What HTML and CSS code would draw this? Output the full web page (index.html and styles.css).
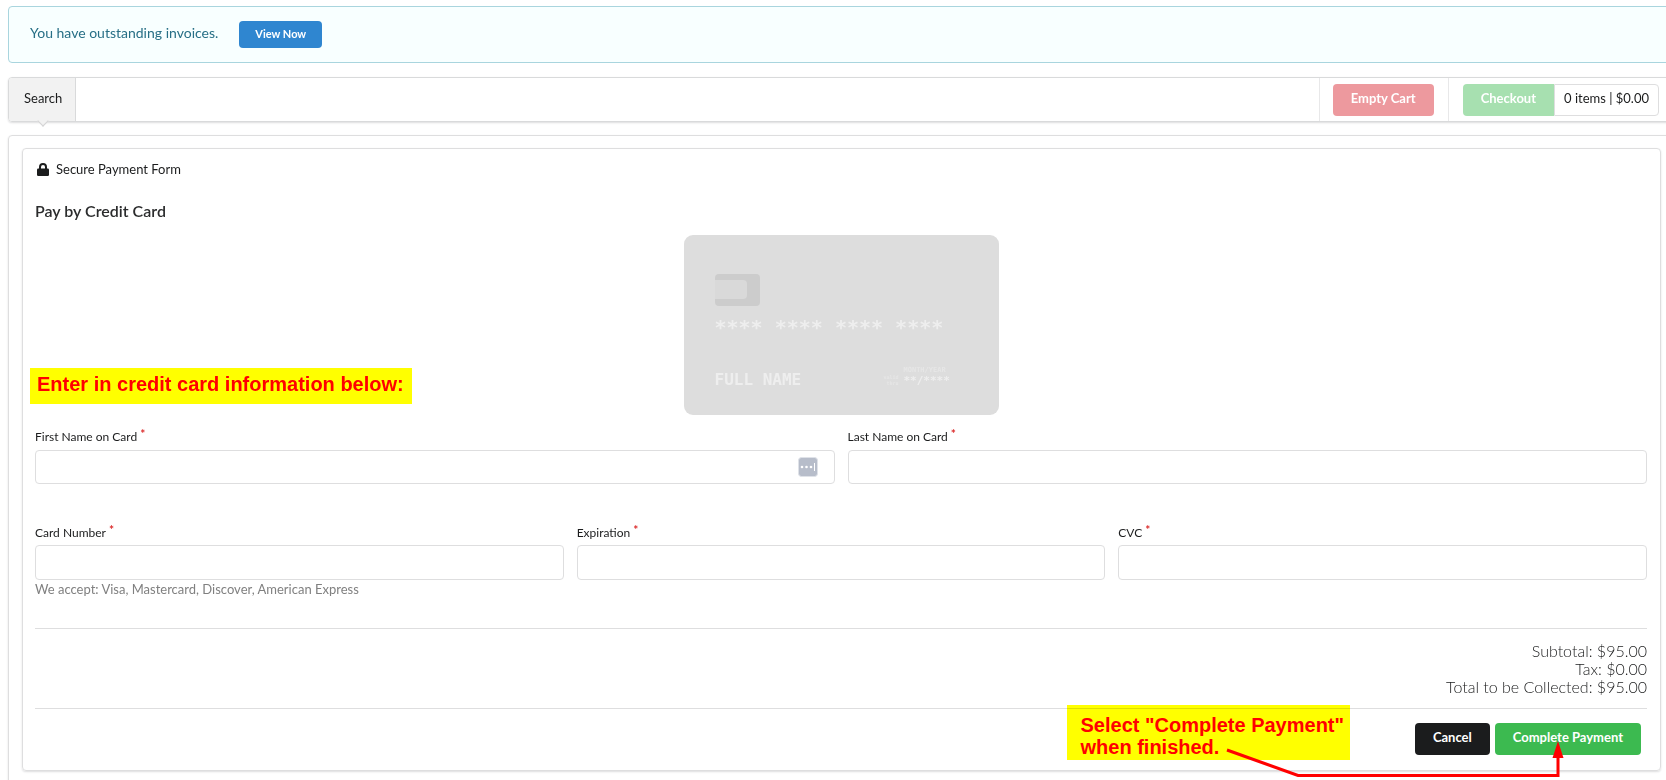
FILE: index.html
```html
<!DOCTYPE html>
<html lang="en">
<head>
<meta charset="utf-8">
<title>Secure Payment Form</title>
<link rel="stylesheet" href="styles.css">
</head>
<body>
<div class="page">
  <section class="message">
    <p class="message-text">You have outstanding invoices.</p>
    <button type="button" class="button small blue">View Now</button>
  </section>

  <nav class="menu">
    <a href="#" class="menu-item active">Search</a>
    <div class="menu-right">
      <div class="menu-cell"><button type="button" class="button red">Empty Cart</button></div>
      <div class="menu-cell last">
        <button type="button" class="button mint">Checkout</button>
        <a href="#" class="cart-label">0 items | $0.00</a>
      </div>
    </div>
  </nav>

  <main class="segment outer">
    <form class="segment inner">
      <header class="form-header">
        <svg class="lock" viewBox="0 0 12 13" aria-hidden="true">
          <path d="M3 6V4a3 3 0 0 1 6 0v2" fill="none" stroke="#1b1c1d" stroke-width="2"/>
          <rect x="0" y="5.500" width="12" height="7.500" rx="1.200" fill="#1b1c1d"/>
        </svg>
        <span>Secure Payment Form</span>
      </header>
      <h1 class="title">Pay by Credit Card</h1>

      <div class="card-stage">
        <div class="card">
          <div class="chip"><div class="chip-inner"></div></div>
          <div class="card-number">**** **** **** ****</div>
          <div class="card-foot">
            <div class="card-name">FULL NAME</div>
            <div class="card-valid">valid<br>thru</div>
            <div class="card-date"><div class="card-caption">MONTH/YEAR</div>**/****</div>
          </div>
        </div>
        <p class="note note-enter">Enter in credit card information below:</p>
      </div>

      <div class="row two">
        <div class="field">
          <label for="first">First Name on Card<span class="req">*</span></label>
          <div class="input-wrap">
            <input id="first" type="text">
            <svg class="fill-icon" viewBox="0 0 20 20" aria-hidden="true">
              <rect x="0.500" y="0.500" width="19" height="19" rx="3" fill="#b7bdca" stroke="#dfe2e8"/>
              <circle cx="4" cy="10" r="1.300" fill="#fff"/><circle cx="8.500" cy="10" r="1.300" fill="#fff"/><circle cx="13" cy="10" r="1.300" fill="#fff"/>
              <path d="M16.500 6v8" stroke="#fff"/>
            </svg>
          </div>
        </div>
        <div class="field">
          <label for="last">Last Name on Card<span class="req">*</span></label>
          <input id="last" type="text">
        </div>
      </div>

      <div class="row three">
        <div class="field">
          <label for="number">Card Number<span class="req">*</span></label>
          <input id="number" type="text">
          <p class="help">We accept: Visa, Mastercard, Discover, American Express</p>
        </div>
        <div class="field">
          <label for="expiration">Expiration<span class="req">*</span></label>
          <input id="expiration" type="text">
        </div>
        <div class="field">
          <label for="cvc">CVC<span class="req">*</span></label>
          <input id="cvc" type="text">
        </div>
      </div>

      <div class="totals">
        <div>Subtotal: $95.00</div>
        <div>Tax: $0.00</div>
        <div>Total to be Collected: $95.00</div>
      </div>

      <div class="actions">
        <button type="button" class="button black">Cancel</button>
        <button type="submit" class="button green">Complete Payment</button>
        <p class="note note-complete">Select "Complete Payment"<br>when finished.</p>
        <svg class="arrow" viewBox="0 0 348 40" aria-hidden="true">
          <path d="M10 8L81 33.500H341V12" fill="none" stroke="#f00" stroke-width="3"/>
          <path d="M341 -1L346.500 16H335.500Z" fill="#f00"/>
        </svg>
      </div>
    </form>
  </main>
</div>
</body>
</html>
```
FILE: styles.css
```css
* { box-sizing: border-box; }
body {
  margin: 0;
  height: 100vh;
  overflow: hidden;
  background: #fff;
  color: #1b1c1d;
  font: 13px/18px Lato, sans-serif;
}
p, h1 { margin: 0; }
a { color: #1b1c1d; text-decoration: none; }

/* The page runs slightly past the right edge of the window. */
.page { margin: 6px -9px 0 8px; }

.message {
  display: flex;
  align-items: flex-start;
  gap: 21px;
  height: 57px;
  padding: 14px 21px;
  border: 1px solid #a9d5de;
  border-radius: 4px;
  background: #f8ffff;
  color: #276f86;
}
.message-text { font-size: 14px; line-height: 24px; }

.button {
  height: 32px;
  padding: 0 18px 4px;
  border: 0;
  border-radius: 4px;
  color: #fff;
  font: 700 13px/18px Lato, sans-serif;
  white-space: nowrap;
}
.small { height: 27px; padding: 0 16px 2px; font-size: 11px; }
.blue { background: #2f86d0; }
.red { background: #ed999e; }
.mint { background: #a7e0b0; border-radius: 4px 0 0 4px; }
.black { background: #1b1c1d; }
.green { background: #3cba50; }

.menu {
  display: flex;
  height: 45px;
  margin-top: 14px;
  border: 1px solid #d9dadb;
  border-radius: 4px;
  box-shadow: 0 1px 2px rgba(34, 36, 38, 0.15);
}
.menu-item {
  position: relative;
  display: flex;
  align-items: center;
  padding: 0 13px 3px 15px;
  border-right: 1px solid #d9dadb;
  border-radius: 3px 0 0 3px;
}
.active { background: #f2f2f2; }
.active::after {
  content: "";
  position: absolute;
  left: 50%;
  bottom: -4px;
  width: 7px;
  height: 7px;
  margin-left: -3px;
  border: solid #d4d4d5;
  border-width: 0 1px 1px 0;
  background: #f2f2f2;
  transform: rotate(45deg);
}
.menu-right { display: flex; margin-left: auto; }
.menu-cell {
  display: flex;
  align-items: center;
  padding: 0 14px 0 13px;
  border-left: 1px solid #e8e8e9;
}
.last { padding-right: 15px; padding-left: 14px; }
.cart-label {
  height: 32px;
  padding: 4px 9px;
  border: 1px solid #dededf;
  border-radius: 0 4px 4px 0;
}

.segment {
  border: 1px solid #dededf;
  border-radius: 4px;
  box-shadow: 0 1px 2px rgba(34, 36, 38, 0.15);
}
.outer { margin-top: 13px; padding: 12px 13px 40px; }
.inner { padding: 11px 13px 12px 12px; }

.form-header { display: flex; align-items: center; gap: 7px; padding-left: 2px; }
.lock { width: 12px; height: 13px; }
.title { margin-top: 22px; color: #2b2c2d; font-size: 16px; line-height: 22px; font-weight: 600; }

.card-stage { position: relative; display: flex; justify-content: center; margin-top: 13px; }
.card {
  width: 315px;
  height: 180px;
  padding: 39px 31px 0;
  border-radius: 9px;
  background: #ddd;
  color: #eee;
  font-family: "DejaVu Sans Mono", monospace;
  font-weight: 700;
}
.chip { width: 45px; height: 32px; padding-top: 6px; border-radius: 4px; background: #ccc; }
.chip-inner { width: 32px; height: 19px; border-radius: 0 4px 4px 0; background: #d9d9d9; }
.card-number { margin-top: 10px; font-size: 20px; line-height: 22px; white-space: pre; }
.card-foot { display: flex; align-items: flex-start; margin-top: 22px; }
.card-name { width: 168px; margin-top: 10px; font-size: 16px; line-height: 20px; }
.card-valid { width: 16px; margin-right: 5px; margin-top: 14px; font-size: 5px; line-height: 6px; text-align: right; color: #e6e6e6; }
.card-date { padding-top: 6px; font-size: 11px; line-height: 14px; }
.card-caption { font-size: 7px; line-height: 8px; color: #e6e6e6; }

.note {
  position: absolute;
  background: #ff0;
  color: #f00;
  font: 700 20px/22px "Liberation Sans", Arial, sans-serif;
  white-space: nowrap;
  mix-blend-mode: multiply;
}
.note-enter { left: -5px; bottom: 11px; padding: 5px 8px 9px 7px; }

.row { display: grid; gap: 13px; }
.two { grid-template-columns: 1fr 1fr; margin-top: 13px; }
.three { grid-template-columns: 1fr 1fr 1fr; margin-top: 40px; }
label { display: block; margin-bottom: 4px; font-size: 12px; line-height: 18px; }
.three label { margin-bottom: 3px; }
.req { margin-left: 3px; color: #db2828; font-weight: 700; vertical-align: top; line-height: 12px; }
input {
  display: block;
  width: 100%;
  height: 34px;
  padding: 0 12px;
  border: 1px solid #dededf;
  border-radius: 4px;
  background: #fff;
  font: 13px/18px Lato, sans-serif;
}
.three input { height: 35px; }
.input-wrap { position: relative; }
.fill-icon { position: absolute; top: 7px; right: 17px; width: 20px; height: 20px; }
.help { color: #808080; }

.totals {
  margin-top: 30px;
  padding: 13px 0 12px;
  border: solid #dededf;
  border-width: 1px 0;
  font-size: 16px;
  font-weight: 300;
  text-align: right;
}
.actions {
  position: relative;
  display: flex;
  justify-content: flex-end;
  gap: 5px;
  padding: 14px 6px 3px;
}
.note-complete { right: 297px; top: -4px; padding: 9px 6px 2px 14px; }
.arrow { position: absolute; right: 82px; top: 33px; width: 348px; height: 40px; overflow: visible; }
```
